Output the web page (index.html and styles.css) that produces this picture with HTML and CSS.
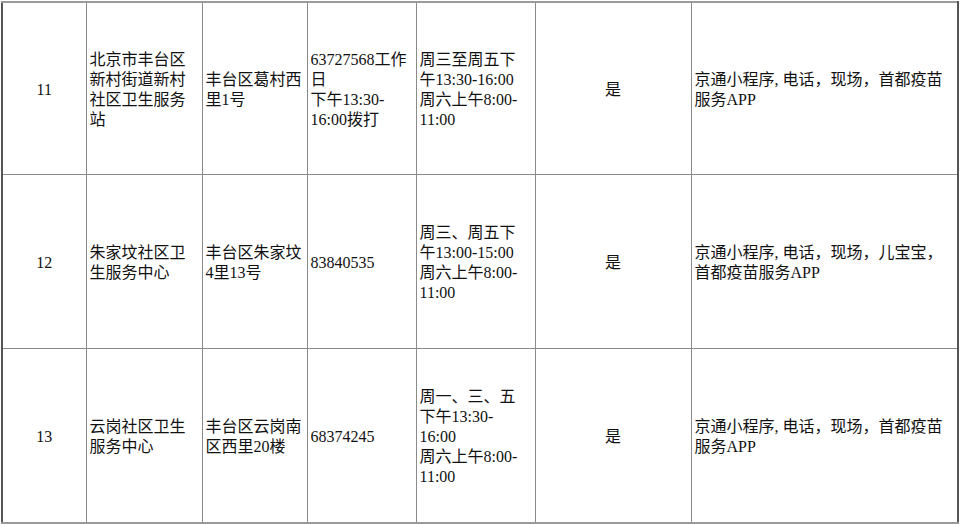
FILE: index.html
```html
<!DOCTYPE html>
<html lang="zh-CN">
<head>
<meta charset="utf-8">
<title>社区卫生服务</title>
<link rel="stylesheet" href="styles.css">
</head>
<body>
<table class="sheet">
  <colgroup>
    <col class="c-no">
    <col class="c-name">
    <col class="c-addr">
    <col class="c-tel">
    <col class="c-time">
    <col class="c-yes">
    <col class="c-way">
  </colgroup>
  <tbody>
    <tr class="first">
      <td class="num">11</td>
      <td>北京市丰台区<br>新村街道新村<br>社区卫生服务<br>站</td>
      <td>丰台区葛村西<br>里1号</td>
      <td>63727568工作<br>日<br>下午13:30-<br>16:00拨打</td>
      <td>周三至周五下<br>午13:30-16:00<br>周六上午8:00-<br>11:00</td>
      <td class="center">是</td>
      <td>京通小程序,&nbsp;电话，现场，首都疫苗<br>服务APP</td>
    </tr>
    <tr>
      <td class="num">12</td>
      <td>朱家坟社区卫<br>生服务中心</td>
      <td>丰台区朱家坟<br>4里13号</td>
      <td>83840535</td>
      <td>周三、周五下<br>午13:00-15:00<br>周六上午8:00-<br>11:00</td>
      <td class="center">是</td>
      <td>京通小程序,&nbsp;电话，现场，儿宝宝，<br>首都疫苗服务APP</td>
    </tr>
    <tr class="last">
      <td class="num">13</td>
      <td>云岗社区卫生<br>服务中心</td>
      <td>丰台区云岗南<br>区西里20楼</td>
      <td>68374245</td>
      <td>周一、三、五<br>下午13:30-<br>16:00<br>周六上午8:00-<br>11:00</td>
      <td class="center">是</td>
      <td>京通小程序,&nbsp;电话，现场，首都疫苗<br>服务APP</td>
    </tr>
  </tbody>
</table>
</body>
</html>
```
FILE: styles.css
```css
html, body {
  margin: 0;
  padding: 0;
  background: #ffffff;
}

.sheet {
  border-collapse: collapse;
  table-layout: fixed;
  width: 956px;
  margin: 1px 0 0 1px;
  font-family: "Liberation Serif", "Noto Sans CJK SC", serif;
  font-size: 16px;
  line-height: 20px;
  color: #111111;
  border-left: 2px solid #555555;
  border-right: 2px solid #555555;
  border-top: 2px solid #9a9a9a;
  border-bottom: 2px solid #9a9a9a;
}

.c-no { width: 84px; }
.c-name { width: 116px; }
.c-addr { width: 105px; }
.c-tel { width: 109px; }
.c-time { width: 119px; }
.c-yes { width: 156px; }
.c-way { width: 267px; }

.sheet tr {
  height: 174px;
}

.sheet tr.first {
  height: 172px;
}

.sheet tr.last {
  height: 175px;
}

.sheet td {
  border: 1px solid #8a8a8a;
  padding: 4px 0 0 3px;
  vertical-align: middle;
  white-space: nowrap;
  overflow: hidden;
  text-align: left;
}

.sheet td.num,
.sheet td.center {
  text-align: center;
  padding: 4px 0 0 0;
}
```
